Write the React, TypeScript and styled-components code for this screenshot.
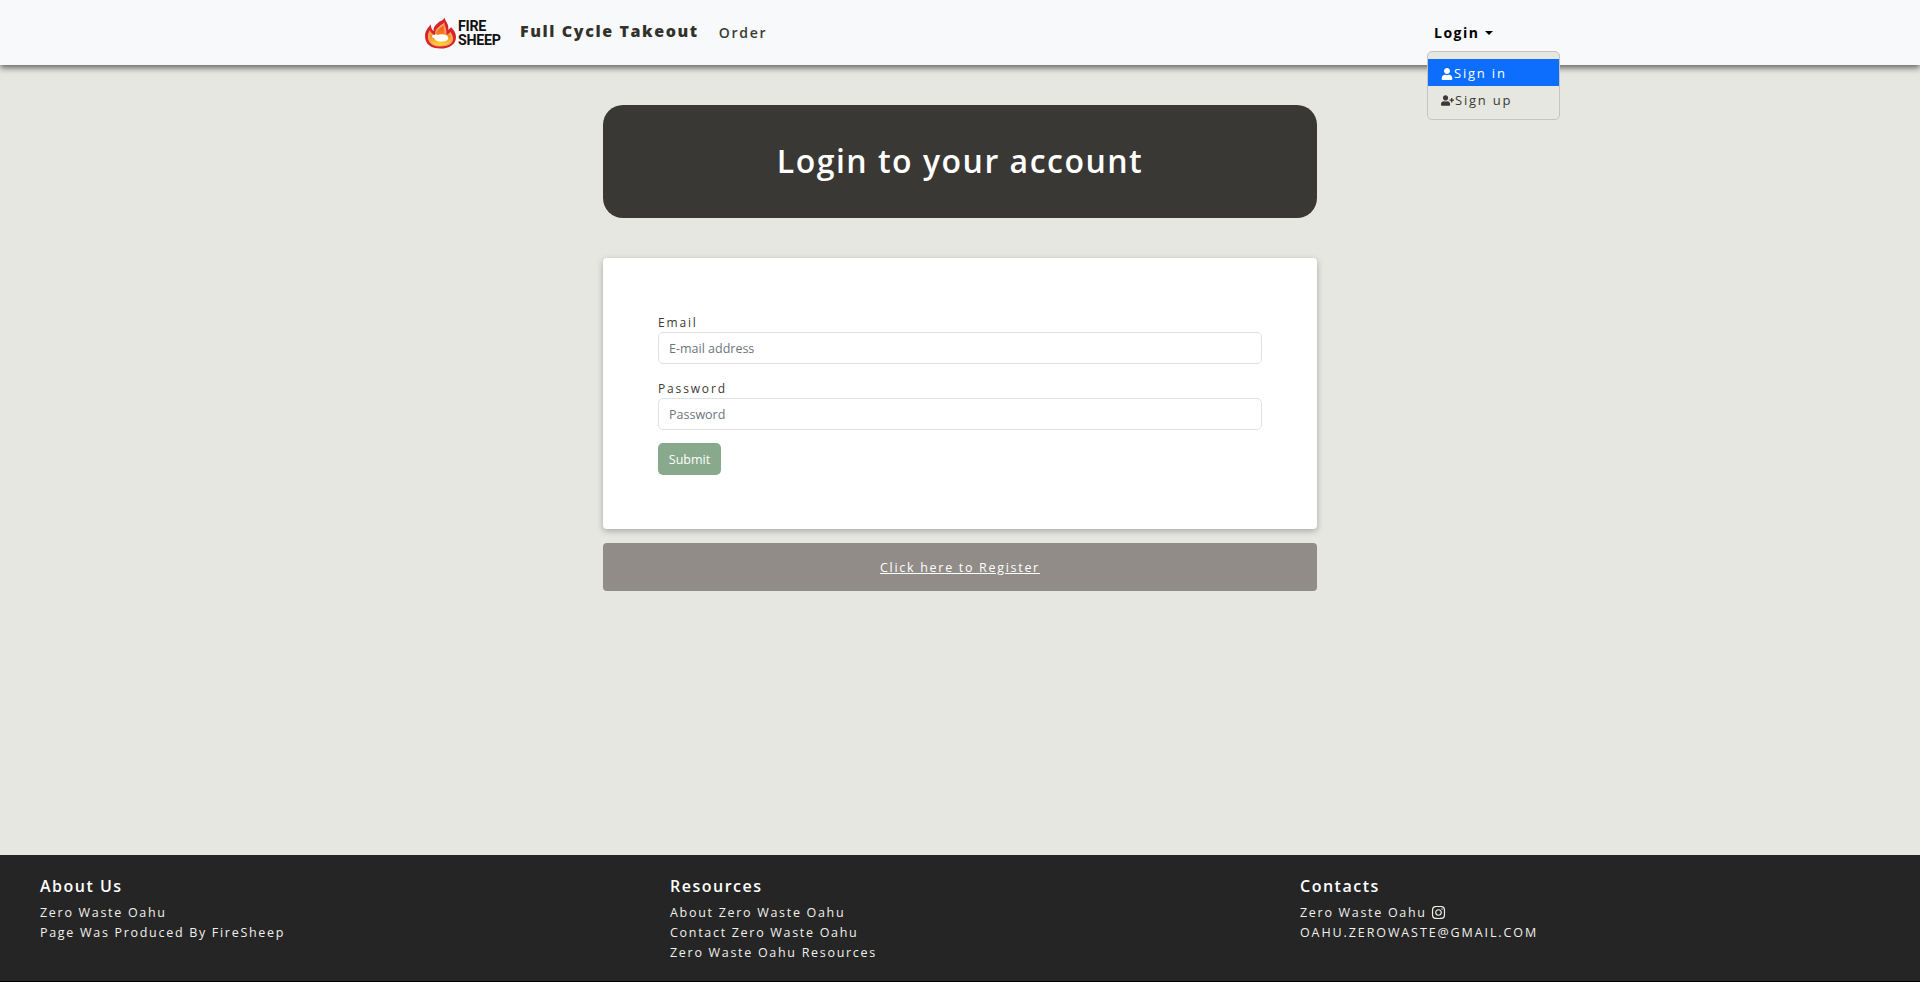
import styled, { createGlobalStyle } from 'styled-components';
import { FaUser, FaUserPlus, FaInstagram } from 'react-icons/fa';

const GlobalStyle = createGlobalStyle`
  * {
    box-sizing: border-box;
  }
  body {
    margin: 0;
    background: #e6e7e1;
    font-family: "Open Sans", "Noto Sans", sans-serif;
    letter-spacing: 1.7px;
  }
`;

const Page = styled.div`
  min-height: 982px;
  display: flex;
  flex-direction: column;
`;

const NavBar = styled.nav`
  position: relative;
  height: 65px;
  flex: none;
  padding: 0 360px 0 425px;
  display: flex;
  align-items: center;
  background: #f8f9fa;
  box-shadow: 0 3px 6px rgba(0, 0, 0, 0.55);
`;

const Logo = styled.a`
  display: flex;
  align-items: center;
  gap: 2px;
  width: 95px;
  height: 34px;
`;

const LogoText = styled.span`
  display: block;
  width: 55px;
  font-family: "Roboto", "Liberation Sans", sans-serif;
  font-weight: 700;
  font-size: 15.5px;
  line-height: 14px;
  letter-spacing: -0.3px;
  color: #111;
  transform: scaleX(0.92);
  transform-origin: left center;
`;

const Brand = styled.a`
  font-size: 16px;
  font-weight: 800;
  letter-spacing: 1.6px;
  color: #33312c;
  margin-bottom: 3px;
`;

const NavLink = styled.a`
  margin-left: 20px;
  font-size: 14px;
  font-weight: 600;
  color: #3a3934;
`;

const LoginMenu = styled.div`
  position: relative;
  margin-left: auto;
  width: 133px;
`;

const LoginToggle = styled.a`
  display: flex;
  align-items: center;
  margin-left: 7px;
  font-size: 14px;
  font-weight: 700;
  letter-spacing: 1.5px;
  color: #000;
  &::after {
    content: "";
    margin-left: 6px;
    border-top: 4px solid #000;
    border-left: 4px solid transparent;
    border-right: 4px solid transparent;
  }
`;

const Dropdown = styled.div`
  position: absolute;
  top: 28px;
  left: 0;
  width: 133px;
  height: 69px;
  padding: 7px 0;
  background: #e6e7e1;
  border: 1px solid #c4c5c1;
  border-radius: 5px;
`;

const DropdownItem = styled.a<{ $active?: boolean }>`
  display: flex;
  align-items: center;
  gap: 1px;
  height: 27px;
  padding-left: 13px;
  font-size: 13px;
  letter-spacing: 1.8px;
  color: ${({ $active }) => ($active ? '#fff' : '#3a3934')};
  background: ${({ $active }) => ($active ? '#0d6efd' : 'transparent')};
  svg {
    margin-top: 2px;
  }
`;

const Main = styled.main`
  flex: 1;
  width: 714px;
  margin: 0 auto;
  padding-top: 40px;
`;

const Hero = styled.div`
  height: 113px;
  padding-bottom: 3px;
  display: flex;
  align-items: center;
  justify-content: center;
  background: #3a3835;
  border-radius: 20px;
`;

const HeroTitle = styled.h1`
  margin: 0;
  font-size: 32px;
  font-weight: 600;
  letter-spacing: 1.5px;
  color: #fff;
`;

const Card = styled.form`
  margin-top: 40px;
  height: 271px;
  padding: 55px;
  background: #fff;
  border-radius: 4px;
  box-shadow: 0 2px 6px rgba(0, 0, 0, 0.28);
`;

const Field = styled.div`
  margin-bottom: 13px;
  & + & {
    margin-top: 15px;
  }
`;

const Label = styled.label`
  display: block;
  height: 19px;
  font-size: 12px;
  line-height: 19px;
  letter-spacing: 1.85px;
  color: #3a3934;
`;

const Input = styled.input`
  display: block;
  width: 100%;
  height: 32px;
  padding: 0 10px;
  font-family: inherit;
  font-size: 12.5px;
  letter-spacing: 0;
  background: #fff;
  border: 1px solid #dee2e6;
  border-radius: 5px;
  &::placeholder {
    color: #6c757d;
    opacity: 1;
  }
`;

const SubmitButton = styled.button`
  display: block;
  width: 63px;
  height: 32px;
  padding: 0;
  font-family: inherit;
  font-size: 12.5px;
  letter-spacing: 0;
  color: #fff;
  background: #88a98c;
  border: none;
  border-radius: 5px;
`;

const RegisterBar = styled.div`
  margin-top: 14px;
  height: 48px;
  display: flex;
  align-items: center;
  justify-content: center;
  background: #918c87;
  border-radius: 4px;
`;

const RegisterLink = styled.a`
  font-size: 12.5px;
  color: #fff;
  text-decoration: underline;
`;

const Footer = styled.footer`
  flex: none;
  height: 127px;
  padding: 20px 40px 0;
  display: grid;
  grid-template-columns: repeat(3, 630px);
  background: #252525;
  border-bottom: 1px solid #000;
`;

const FooterColumn = styled.div`
  display: flex;
  flex-direction: column;
`;

const FooterTitle = styled.h5`
  margin: 0 0 5px;
  font-size: 16px;
  line-height: 22px;
  font-weight: 600;
  letter-spacing: 1.5px;
  color: #fff;
`;

const FooterLine = styled.a<{ $caps?: boolean }>`
  display: flex;
  align-items: center;
  gap: 4px;
  height: 20px;
  font-size: 12.5px;
  letter-spacing: ${({ $caps }) => ($caps ? '1.9px' : '1.7px')};
  color: #f1f1ec;
`;

const Flame = () => (
  <svg width="31" height="32" viewBox="0 0 32 32" aria-hidden="true">
    <defs>
      <linearGradient id="flameInner" x1="0" y1="0" x2="0" y2="1">
        <stop offset="0" stopColor="#f0511f" />
        <stop offset="0.55" stopColor="#fa8f1e" />
        <stop offset="1" stopColor="#fddc3a" />
      </linearGradient>
    </defs>
    <path
      fill="#d9232b"
      d="M16 32C6 32 0 27 0 19c0-5 3-8 6-12 0 3 1 6 3 7-1-5 4-8 6-10 2 0 4-2 5-4 1 4 5 7 4 13l3-3c3 3 5 6 5 10 0 7-6 12-16 12z"
    />
    <path
      fill="#f6a45c"
      d="M16 30C8 30 3 26 3 20c0-3 1-5 2-7 1 3 3 5 6 5-2-5 3-8 5-10 2-1 3-2 4-3 0 4 3 7 2 13 2 0 3-2 4-3 2 2 3 5 3 7 0 5-5 8-13 8z"
    />
    <path
      fill="url(#flameInner)"
      d="M16 29C9 29 5 26 5 21c0-2 0-3 1-4 1 2 3 3 6 3-2-5 2-8 5-10l2-2c0 4 2 7 1 11 2 1 4-1 5-2 1 1 2 3 2 5 0 4-4 7-11 7z"
    />
    <path
      fill="#fff"
      d="M7 19c1-1 2-1 3-1 0-1 2-1 3 0 3-1 6-1 8 0 2 0 3 2 3 4-1 2-3 3-8 3-3 0-6-1-7-4-1 0-2-1-2-2z"
    />
  </svg>
);

const App = () => {
  return (
    <Page>
      <GlobalStyle />
      <NavBar>
        <Logo>
          <Flame />
          <LogoText>
            FIRE
            <br />
            SHEEP
          </LogoText>
        </Logo>
        <Brand>Full Cycle Takeout</Brand>
        <NavLink>Order</NavLink>
        <LoginMenu>
          <LoginToggle>Login</LoginToggle>
          <Dropdown>
            <DropdownItem $active>
              <FaUser size={12} />
              Sign in
            </DropdownItem>
            <DropdownItem>
              <FaUserPlus size={13} />
              Sign up
            </DropdownItem>
          </Dropdown>
        </LoginMenu>
      </NavBar>
      <Main>
        <Hero>
          <HeroTitle>Login to your account</HeroTitle>
        </Hero>
        <Card>
          <Field>
            <Label>Email</Label>
            <Input type="email" placeholder="E-mail address" />
          </Field>
          <Field>
            <Label>Password</Label>
            <Input type="password" placeholder="Password" />
          </Field>
          <SubmitButton type="button">Submit</SubmitButton>
        </Card>
        <RegisterBar>
          <RegisterLink href="#">Click here to Register</RegisterLink>
        </RegisterBar>
      </Main>
      <Footer>
        <FooterColumn>
          <FooterTitle>About Us</FooterTitle>
          <FooterLine>Zero Waste Oahu</FooterLine>
          <FooterLine>Page Was Produced By FireSheep</FooterLine>
        </FooterColumn>
        <FooterColumn>
          <FooterTitle>Resources</FooterTitle>
          <FooterLine>About Zero Waste Oahu</FooterLine>
          <FooterLine>Contact Zero Waste Oahu</FooterLine>
          <FooterLine>Zero Waste Oahu Resources</FooterLine>
        </FooterColumn>
        <FooterColumn>
          <FooterTitle>Contacts</FooterTitle>
          <FooterLine>
            Zero Waste Oahu <FaInstagram size={15} />
          </FooterLine>
          <FooterLine $caps>OAHU.ZEROWASTE@GMAIL.COM</FooterLine>
        </FooterColumn>
      </Footer>
    </Page>
  );
};

export default App;
